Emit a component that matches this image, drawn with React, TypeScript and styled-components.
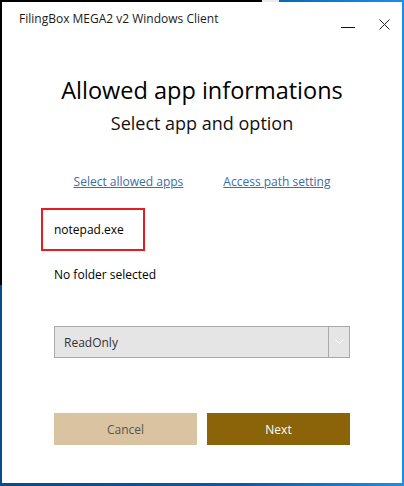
import React from "react";
import styled, { createGlobalStyle } from "styled-components";

const Global = createGlobalStyle`
  html, body { margin: 0; padding: 0; }
  body {
    width: 404px;
    height: 486px;
    overflow: hidden;
    font-family: "Open Sans", "Noto Sans", sans-serif;
  }
`;

const Desktop = styled.div`
  width: 404px;
  height: 486px;
  box-sizing: border-box;
  padding: 2px 2px 3px 2px;
  background:
    linear-gradient(#000, #000) 0 0 / 262px 285px no-repeat,
    linear-gradient(#ececec, #ececec) 262px 0 / 17px 2px no-repeat,
    linear-gradient(to right, #074b8c, #0a5aa6 60%, #1a8fe6);
`;

const Window = styled.div`
  width: 400px;
  height: 481px;
  background: #fff;
  display: flex;
  flex-direction: column;
`;

const TitleBar = styled.div`
  height: 32px;
  display: flex;
  align-items: flex-start;
  padding-left: 17px;
`;

const TitleText = styled.div`
  font-size: 12px;
  color: #1b1b1b;
  margin-top: 8px;
  flex: 1;
`;

const CaptionButton = styled.div`
  width: 36px;
  height: 44px;
  display: flex;
  align-items: center;
  justify-content: center;
  color: #222;
`;

const Content = styled.div`
  display: flex;
  flex-direction: column;
  align-items: center;
`;

const Heading = styled.h1`
  margin: 40px 0 0;
  font-weight: 400;
  font-size: 23.5px;
  line-height: 32px;
  color: #000;
`;

const SubHeading = styled.h2`
  margin: 5px 0 0;
  font-weight: 400;
  font-size: 18px;
  line-height: 24px;
  color: #111;
`;

const LinkRow = styled.div`
  display: flex;
  gap: 40px;
  margin-top: 39px;
`;

const Link = styled.a`
  font-size: 12px;
  line-height: 16px;
  color: #3b6ea5;
  text-decoration: underline;
  text-underline-offset: 1px;
  cursor: pointer;
`;

const Body = styled.div`
  display: flex;
  flex-direction: column;
  padding: 0 52px 0 52px;
`;

const AppBox = styled.div`
  margin-top: 18px;
  margin-left: -13px;
  width: 104px;
  height: 43px;
  box-sizing: border-box;
  border: 2px solid #e81b23;
  padding-left: 11px;
  display: flex;
  align-items: center;
  font-size: 12px;
  line-height: 16px;
  color: #000;
`;

const Label = styled.div`
  margin-top: 16px;
  font-size: 12px;
  line-height: 16px;
  color: #000;
`;

const Select = styled.div`
  margin-top: 43px;
  height: 32px;
  box-sizing: border-box;
  border: 1px solid #a9a9a9;
  background: #e5e5e5;
  display: flex;
  align-items: stretch;
`;

const SelectValue = styled.div`
  flex: 1;
  display: flex;
  align-items: center;
  padding-left: 9px;
  font-size: 12px;
  color: #333;
`;

const SelectArrow = styled.div`
  width: 20px;
  border-left: 1px solid #a9a9a9;
  display: flex;
  align-items: center;
  justify-content: center;
`;

const ButtonRow = styled.div`
  margin-top: 55px;
  display: flex;
  gap: 10px;
`;

const Button = styled.button<{ $primary?: boolean }>`
  flex: 1;
  height: 32px;
  border: none;
  font-family: inherit;
  font-size: 12px;
  background: ${(p) => (p.$primary ? "#8b6309" : "#d9c3a1")};
  color: ${(p) => (p.$primary ? "#fff" : "#555")};
`;

export default function App() {
  return (
    <>
      <Global />
      <Desktop>
        <Window>
          <TitleBar>
            <TitleText>FilingBox MEGA2 v2 Windows Client</TitleText>
            <CaptionButton>
              <svg width="14" height="14" viewBox="0 0 14 14">
                <path d="M0 10.5H14" stroke="#111" strokeWidth="1" />
              </svg>
            </CaptionButton>
            <CaptionButton>
              <svg width="11" height="11" viewBox="0 0 11 11">
                <path d="M0.5 0.5L10.5 10.5M10.5 0.5L0.5 10.5" stroke="#222" strokeWidth="1" />
              </svg>
            </CaptionButton>
          </TitleBar>
          <Content>
            <Heading>Allowed app informations</Heading>
            <SubHeading>Select app and option</SubHeading>
            <LinkRow>
              <Link>Select allowed apps</Link>
              <Link>Access path setting</Link>
            </LinkRow>
          </Content>
          <Body>
            <AppBox>notepad.exe</AppBox>
            <Label>No folder selected</Label>
            <Select>
              <SelectValue>ReadOnly</SelectValue>
              <SelectArrow>
                <svg width="9" height="6" viewBox="0 0 9 6">
                  <path d="M0.5 0.5L4.5 4.5L8.5 0.5" stroke="#fff" strokeWidth="1" fill="none" />
                </svg>
              </SelectArrow>
            </Select>
            <ButtonRow>
              <Button>Cancel</Button>
              <Button $primary>Next</Button>
            </ButtonRow>
          </Body>
        </Window>
      </Desktop>
    </>
  );
}
